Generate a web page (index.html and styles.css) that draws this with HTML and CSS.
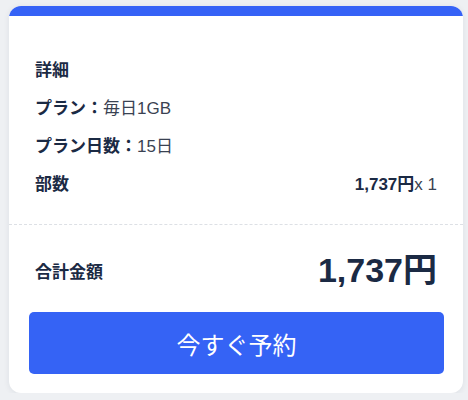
FILE: index.html
```html
<!DOCTYPE html>
<html>
<head>
  <title>予約内容</title>
  <meta name="viewport" content="width=device-width, initial-scale=1">
  <link rel="stylesheet" href="styles.css">
</head>
<body>
  <div class="card">
    <div class="card-bar"></div>

    <div class="details">
      <div class="row title">詳細</div>
      <div class="row"><b>プラン：</b>毎日1GB</div>
      <div class="row"><b>プラン日数：</b>15日</div>
      <div class="row split">
        <b>部数</b>
        <span><b>1,737円</b>x 1</span>
      </div>
    </div>

    <div class="total">
      <span class="total-label">合計金額</span>
      <span class="total-price">1,737円</span>
    </div>

    <div class="actions">
      <button class="book-btn">今すぐ予約</button>
    </div>
  </div>
</body>
</html>
```

FILE: styles.css
```css
*, *::before, *::after {
  box-sizing: border-box;
  margin: 0;
  padding: 0;
}

body {
  font-family: "Liberation Sans", "Noto Sans CJK JP", sans-serif;
  background-color: #eef0f3;
  color: #1b2a44;
  padding: 6px 0 0 9px;
}

.card {
  width: 454px;
  height: 387px;
  background: #ffffff;
  border-radius: 12px;
  overflow: hidden;
  box-shadow: 0 1px 6px rgba(30, 40, 60, 0.08);
}

.card-bar {
  height: 10px;
  background: #3562f6;
}

.details {
  padding: 36px 26px 20px;
  border-bottom: 1px dashed #dde0e5;
}

.row {
  font-size: 17px;
  line-height: 38px;
  height: 38px;
  color: #3a4252;
}

.row b {
  color: #1b2a44;
}

.row.title {
  font-weight: bold;
  color: #1b2a44;
}

.split {
  display: flex;
  justify-content: space-between;
  align-items: center;
}

.total {
  display: flex;
  justify-content: space-between;
  align-items: center;
  padding: 25px 26px 0;
  height: 65px;
}

.total-label {
  font-size: 17px;
  font-weight: bold;
}

.total-price {
  font-size: 34px;
  font-weight: bold;
  line-height: 40px;
}

.actions {
  padding: 22px 19px 0 20px;
}

.book-btn {
  display: block;
  width: 100%;
  height: 62px;
  font-family: "Liberation Sans", "Noto Sans CJK JP", sans-serif;
  font-size: 24px;
  color: #ffffff;
  background: #3563f5;
  border: none;
  border-radius: 5px;
  cursor: pointer;
}

.book-btn:hover {
  background: #2d55dd;
}
```
